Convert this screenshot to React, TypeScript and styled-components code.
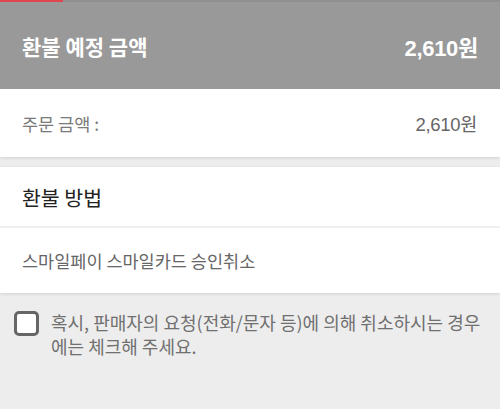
import React from 'react';
import styled, { createGlobalStyle } from 'styled-components';

const GlobalStyle = createGlobalStyle`
  html, body {
    margin: 0;
    padding: 0;
    background: #ededed;
  }
  body {
    font-family: "Noto Sans CJK KR", "Noto Sans", sans-serif;
  }
`;

const Page = styled.div`
  width: 500px;
  min-height: 409px;
  background: #ededed;
`;

const Header = styled.div`
  position: relative;
  height: 89px;
  background: #999999;
  display: flex;
  align-items: center;
  justify-content: space-between;
  padding: 0 22px 0 22px;
  box-sizing: border-box;
  color: #ffffff;
  border-top: 2px solid #8f8f8f;
`;

const Progress = styled.div`
  position: absolute;
  top: -2px;
  left: 0;
  width: 63px;
  height: 2px;
  background: #e0464f;
`;

const HeaderTitle = styled.span`
  font-size: 21px;
  font-weight: 700;
`;

const HeaderAmount = styled.span`
  font-family: "Liberation Sans", "Noto Sans CJK KR", sans-serif;
  font-size: 22px;
  font-weight: 700;
  letter-spacing: -0.3px;
`;

const Card = styled.section<{ $gap?: boolean }>`
  background: #ffffff;
  box-shadow: 0 1px 3px rgba(0, 0, 0, 0.12);
  margin-bottom: ${(p) => (p.$gap ? '10px' : '0')};
`;

const Row = styled.div<{ $height: number; $divider?: boolean }>`
  height: ${(p) => p.$height}px;
  display: flex;
  align-items: center;
  justify-content: space-between;
  padding: 0 23px 0 22px;
  box-sizing: border-box;
  border-bottom: ${(p) => (p.$divider ? '2px solid #efefef' : 'none')};
`;

const Label = styled.span`
  font-size: 17.5px;
  color: #7a7a7a;
`;

const Amount = styled.span`
  font-family: "Liberation Sans", "Noto Sans CJK KR", sans-serif;
  font-size: 18.5px;
  color: #666666;
  letter-spacing: -0.3px;
`;

const SectionTitle = styled.h2`
  margin: 0;
  font-size: 20.5px;
  font-weight: 400;
  color: #222222;
`;

const Method = styled.span`
  font-size: 17.5px;
  color: #666666;
`;

const Notice = styled.label`
  display: flex;
  align-items: flex-start;
  gap: 12px;
  padding: 18px 12px 0 14px;
  cursor: pointer;
`;

const CheckBox = styled.span`
  flex: none;
  width: 25px;
  height: 25px;
  box-sizing: border-box;
  border: 3px solid #666666;
  border-radius: 5px;
  background: #ffffff;
`;

const NoticeText = styled.span`
  font-size: 18px;
  line-height: 24px;
  color: #707070;
  margin-top: -1px;
`;

export default function App() {
  return (
    <Page>
      <GlobalStyle />
      <Header>
        <Progress />
        <HeaderTitle>환불 예정 금액</HeaderTitle>
        <HeaderAmount>2,610원</HeaderAmount>
      </Header>
      <Card $gap>
        <Row $height={68}>
          <Label>주문 금액 :</Label>
          <Amount>2,610원</Amount>
        </Row>
      </Card>
      <Card>
        <Row $height={61} $divider>
          <SectionTitle>환불 방법</SectionTitle>
        </Row>
        <Row $height={65}>
          <Method>스마일페이 스마일카드 승인취소</Method>
        </Row>
      </Card>
      <Notice>
        <CheckBox />
        <NoticeText>
          혹시, 판매자의 요청(전화/문자 등)에 의해 취소하시는 경우에는 체크해 주세요.
        </NoticeText>
      </Notice>
    </Page>
  );
}
